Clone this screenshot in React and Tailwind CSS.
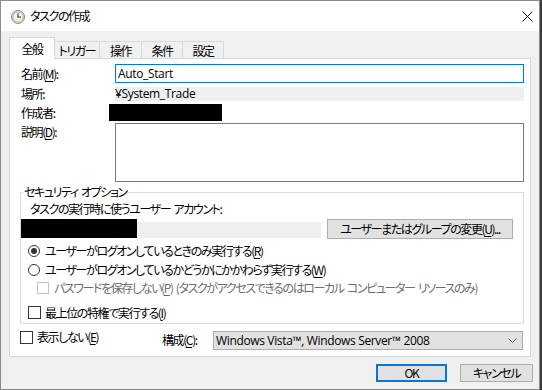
import React from "react";

const JP = "font-['Noto_Sans_CJK_JP',sans-serif] [font-feature-settings:'palt'] tracking-[-1.4px] [word-spacing:2px]";
const LAT = "font-['Open_Sans','Noto_Sans_CJK_JP',sans-serif] tracking-[-0.35px] [word-spacing:0px]";

function U({ children }) {
  return <span className="underline underline-offset-[2px]">{children}</span>;
}

function ClockIcon() {
  return (
    <svg width="14" height="14" viewBox="0 0 14 14">
      <circle cx="7" cy="7" r="6.5" fill="#d4d4d4" stroke="#8c8c8c" />
      <circle cx="7" cy="7" r="4.8" fill="#f8f3df" stroke="#b5b5b5" strokeWidth="0.6" />
      <path d="M7 7V3.6M7 7h2.6" stroke="#333" strokeWidth="1" strokeLinecap="round" />
    </svg>
  );
}

function Radio({ checked }) {
  return (
    <span className="w-[12px] h-[12px] rounded-full border border-[#333] bg-white flex items-center justify-center shrink-0">
      {checked && <span className="w-[6px] h-[6px] rounded-full bg-[#333]" />}
    </span>
  );
}

function Check({ disabled }) {
  return (
    <span
      className={
        disabled
          ? "w-[12px] h-[12px] border border-[#c4c4c4] bg-white shrink-0"
          : "w-[13px] h-[13px] border border-[#333] bg-white shrink-0"
      }
    />
  );
}

const TABS = [
  { label: "トリガー", w: "w-[45px]" },
  { label: "操作", w: "w-[42px]" },
  { label: "条件", w: "w-[41px]" },
  { label: "設定", w: "w-[41px]" },
];

export default function App() {
  return (
    <div className={`w-[542px] h-[390px] bg-[#3b3b3b] flex text-[12px] leading-[14px] text-black whitespace-nowrap ${JP}`}>
      <div className="w-[540px] h-[390px] border border-[#8a8a8a] bg-[#f0f0f0] flex flex-col">
        {/* Title bar */}
        <div className="h-[30px] bg-white flex items-center shrink-0">
          <div className="ml-[10px] mt-[2px]">
            <ClockIcon />
          </div>
          <span className="ml-[5px] text-[12px]">タスクの作成</span>
          <svg className="ml-auto mr-[6px]" width="11" height="11" viewBox="0 0 11 11">
            <path d="M0.5 0.5l10 10M10.5 0.5l-10 10" stroke="#111" strokeWidth="1" />
          </svg>
        </div>

        {/* Body */}
        <div className="flex-1 flex flex-col px-[8px] pt-[6px]">
          {/* Tabs */}
          <div className="flex items-end h-[21px]">
            <div className="w-[46px] h-[22px] mb-[-1px] border border-b-0 border-[#d9d9d9] bg-white relative z-10 flex items-center justify-center">
              全般
            </div>
            {TABS.map((t) => (
              <div
                key={t.label}
                className={`${t.w} h-[17px] border-t border-r border-[#d9d9d9] flex items-center justify-center pt-[1px]`}
              >
                {t.label}
              </div>
            ))}
          </div>

          {/* Panel */}
          <div className="w-[522px] h-[299px] border border-[#d9d9d9] bg-white flex flex-col pt-[5px]">
            <div className="flex items-center h-[19px] pl-[11px]">
              <span className="w-[94px]">
                名前(<U>M</U>):
              </span>
              <input
                readOnly
                value="Auto_Start"
                className={`w-[409px] h-[19px] border border-[#0078d7] px-[2px] text-[12px] outline-none ${LAT}`}
              />
            </div>
            <div className="flex items-center h-[14px] mt-[4px] pl-[11px]">
              <span className="w-[94px]">場所:</span>
              <span className={`w-[409px] h-[14px] bg-[#efefef] leading-[14px] ${LAT}`}>¥System_Trade</span>
            </div>
            <div className="flex items-center h-[17px] mt-[3px] pl-[11px]">
              <span className="w-[94px]">作成者:</span>
              <span className="ml-[-6px] w-[113px] h-[17px] bg-black" />
            </div>
            <div className="flex items-start h-[59px] mt-[2px] pl-[11px]">
              <span className="w-[94px] pt-[2px]">
                説明(<U>D</U>):
              </span>
              <textarea readOnly className="w-[409px] h-[59px] border border-[#7a7a7a] bg-white resize-none outline-none" />
            </div>

            {/* Security options */}
            <fieldset className="ml-[10px] mt-[3px] w-[504px] border border-[#dcdcdc] pb-[1px]">
              <legend className="ml-[2px] px-[1px] leading-[14px]">セキュリティ オプション</legend>
              <div className="pt-[3px] pl-[9px] h-[17px]">タスクの実行時に使うユーザー アカウント:</div>
              <div className="flex items-start h-[20px] mt-[3px]">
                <span className="w-[116px] h-[19px] bg-black" />
                <span className="w-[184px] h-[16px] mt-[3px] bg-[#efefef]" />
                <button className="ml-[6px] w-[186px] h-[20px] bg-[#e1e1e1] border border-[#adadad] flex items-center justify-center">
                  ユーザーまたはグループの変更(<U>U</U>)...
                </button>
              </div>
              <div className="flex items-center h-[19px] mt-[2px] pl-[7px]">
                <Radio checked />
                <span className="ml-[5px]">
                  ユーザーがログオンしているときのみ実行する(<U>R</U>)
                </span>
              </div>
              <div className="flex items-center h-[19px] pl-[7px]">
                <Radio />
                <span className="ml-[5px]">
                  ユーザーがログオンしているかどうかにかかわらず実行する(<U>W</U>)
                </span>
              </div>
              <div className="flex items-center h-[17px] pl-[16px] text-[#6d6d6d]">
                <Check disabled />
                <span className="ml-[5px]">
                  パスワードを保存しない(<U>P</U>) (タスクがアクセスできるのはローカル コンピューター リソースのみ)
                </span>
              </div>
              <div className="flex items-center h-[19px] mt-[7px] pl-[7px]">
                <Check />
                <span className="ml-[4px]">
                  最上位の特権で実行する(<U>I</U>)
                </span>
              </div>
            </fieldset>

            <div className="flex items-start h-[20px] mt-[6px] pl-[10px]">
              <div className="w-[142px] flex items-center h-[14px]">
                <Check />
                <span className="ml-[4px]">
                  表示しない(<U>E</U>)
                </span>
              </div>
              <span className="w-[51px] mt-[3px]">
                構成(<U>C</U>):
              </span>
              <div className="mt-[1px] w-[310px] h-[19px] bg-[#e1e1e1] border border-[#adadad] flex items-center pl-[2px] pr-[5px]">
                <span className={LAT}>Windows Vista™, Windows Server™ 2008</span>
                <svg className="ml-auto" width="9" height="5" viewBox="0 0 9 5">
                  <path d="M0.5 0.5l4 4 4-4" stroke="#555" fill="none" strokeWidth="1" />
                </svg>
              </div>
            </div>
          </div>

          {/* Buttons */}
          <div className="flex justify-end mt-[7px] mr-[-2px]">
            <button className="w-[71px] h-[18px] bg-[#e1e1e1] border-2 border-[#0078d7] flex items-center justify-center">
              OK
            </button>
            <button className="ml-[13px] w-[73px] h-[18px] bg-[#e1e1e1] border border-[#adadad] flex items-center justify-center">
              キャンセル
            </button>
          </div>
        </div>
      </div>
    </div>
  );
}
